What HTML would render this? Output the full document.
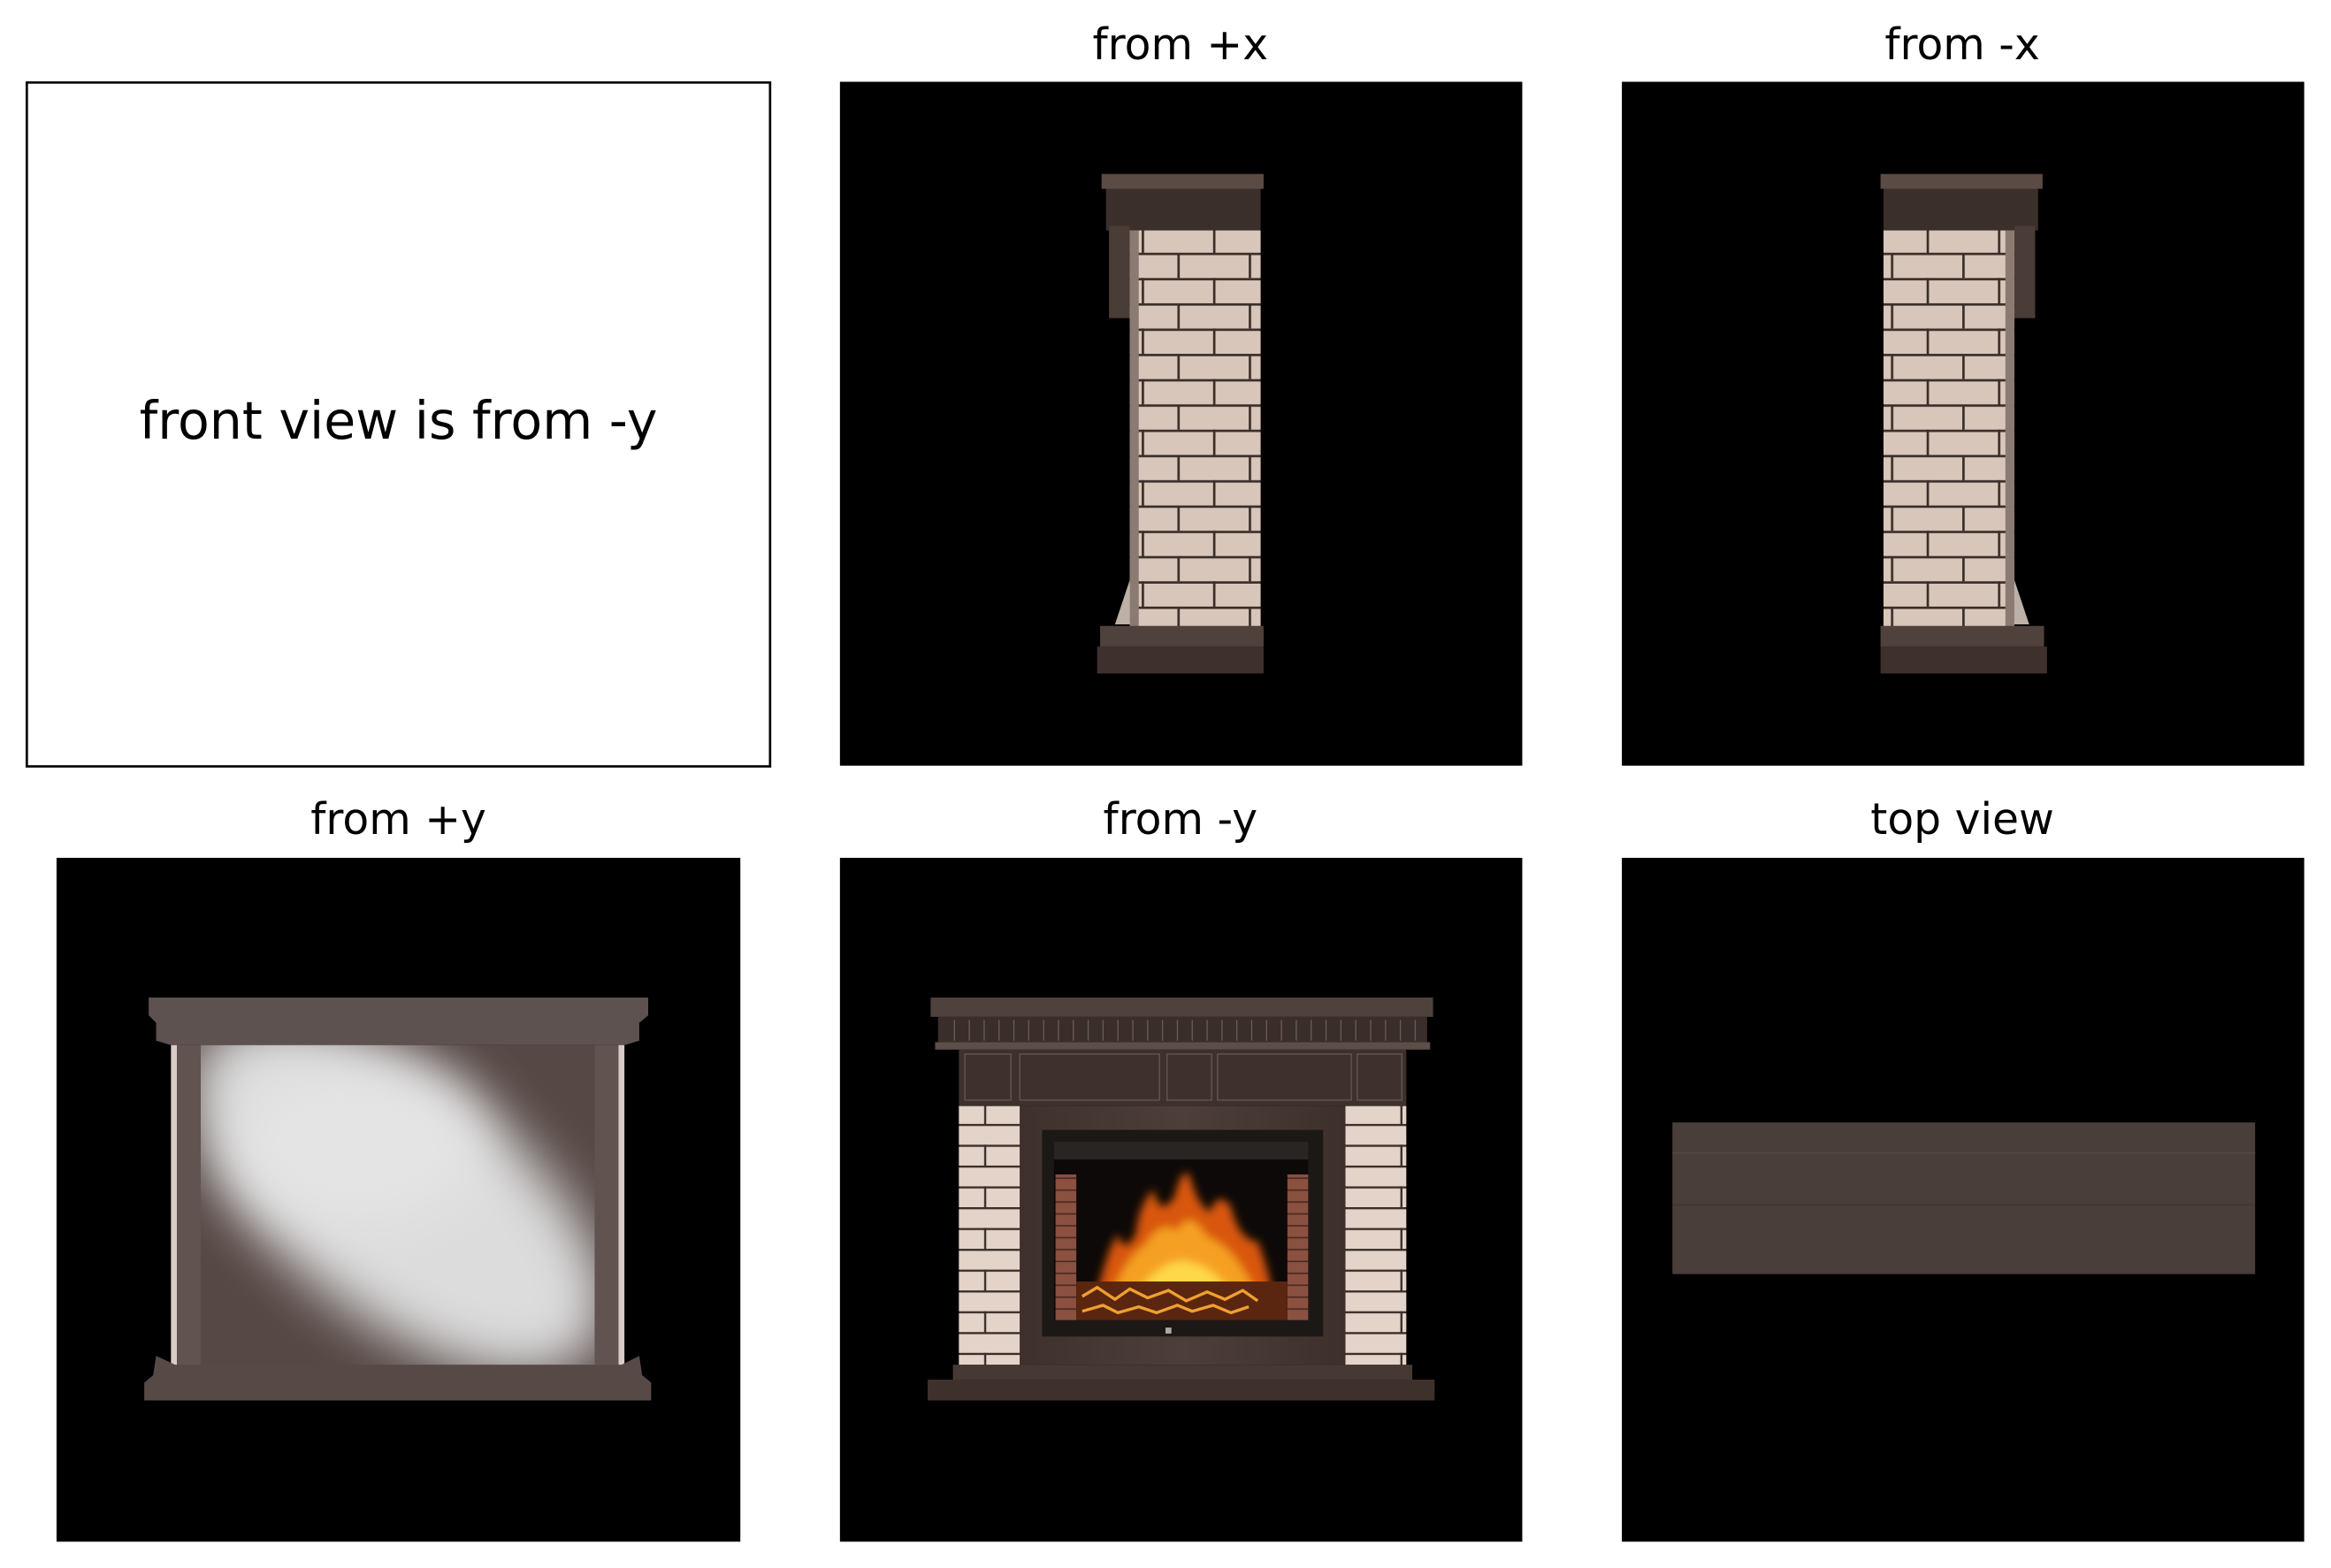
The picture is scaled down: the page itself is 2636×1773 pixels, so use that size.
<!DOCTYPE html>
<html><head><meta charset="utf-8"><style>
html,body{margin:0;padding:0;background:#fff;}
svg{display:block;}
text{font-family:"DejaVu Sans","Liberation Sans",sans-serif;fill:#000;}
</style></head><body>
<svg width="2636" height="1773" viewBox="0 0 1568 1054.7" xmlns="http://www.w3.org/2000/svg">
<defs>
  <pattern id="brickP" x="0" y="0" width="48" height="34" patternUnits="userSpaceOnUse">
    <rect width="48" height="34" fill="#d9c6ba"/>
    <rect x="0" y="0" width="48" height="1.6" fill="#3a2e2a"/>
    <rect x="0" y="17" width="48" height="1.6" fill="#3a2e2a"/>
    <rect x="24" y="0" width="1.6" height="17" fill="#3a2e2a"/>
    <rect x="0" y="17" width="1.6" height="17" fill="#3a2e2a"/>
  </pattern>
  <pattern id="brickS" x="0" y="0" width="40" height="28" patternUnits="userSpaceOnUse">
    <rect width="40" height="28" fill="#e4d3c8"/>
    <rect x="0" y="0" width="40" height="1.4" fill="#3a2e2a"/>
    <rect x="0" y="14" width="40" height="1.4" fill="#3a2e2a"/>
    <rect x="22" y="14" width="1.4" height="14" fill="#3a2e2a"/>
  </pattern>
  <pattern id="redB" width="12" height="8" patternUnits="userSpaceOnUse">
    <rect width="12" height="8" fill="#8a5040"/>
    <rect y="0" width="12" height="1" fill="#4a2a20"/>
  </pattern>
  <linearGradient id="wood" x1="0" x2="1">
    <stop offset="0" stop-color="#3e312c"/><stop offset=".5" stop-color="#4d3e39"/><stop offset="1" stop-color="#3d302b"/>
  </linearGradient>
  <radialGradient id="fire" cx=".5" cy=".75" r=".5">
    <stop offset="0" stop-color="#ffd23a"/><stop offset=".4" stop-color="#f08a12"/><stop offset=".8" stop-color="#8a2a05"/><stop offset="1" stop-color="#1a0a05" stop-opacity="0"/>
  </radialGradient>
  <filter id="blur" x="-50%" y="-50%" width="200%" height="200%"><feGaussianBlur stdDeviation="18"/></filter>
  <filter id="fblur" x="-20%" y="-20%" width="140%" height="140%"><feGaussianBlur stdDeviation="3"/></filter>
  <clipPath id="inner4"><rect x="135" y="703" width="265" height="215"/></clipPath>
</defs>

<!-- titles -->
<text x="794" y="40" font-size="29" text-anchor="middle">from +x</text>
<text x="1320" y="40" font-size="29" text-anchor="middle">from -x</text>
<text x="268" y="561" font-size="29" text-anchor="middle">from +y</text>
<text x="794" y="561" font-size="29" text-anchor="middle">from -y</text>
<text x="1320" y="561" font-size="29" text-anchor="middle">top view</text>

<!-- panel 1 -->
<rect x="18" y="55.5" width="500" height="460" fill="#fff" stroke="#000" stroke-width="1.6"/>
<text x="268" y="295" font-size="34.8" text-anchor="middle">front view is from -y</text>

<!-- panel 2: from +x -->
<rect x="565" y="55" width="459" height="460" fill="#000"/>
<g>
  <rect x="741" y="117" width="109" height="10" fill="#5a4b45"/>
  <rect x="744" y="127" width="104" height="28" fill="#3b2f2b"/>
  <rect x="746" y="152" width="14" height="62" fill="#4a3c37"/>
  <rect x="760" y="155" width="88" height="268" fill="url(#brickP)"/>
  <rect x="760" y="155" width="6" height="268" fill="#8a7a72"/>
  <path d="M760 390 L750 420 L760 420Z" fill="#bdb0a8"/>
  <rect x="740" y="421" width="110" height="14" fill="#4f413c"/>
  <rect x="738" y="435" width="112" height="18" fill="#3e312d"/>
</g>

<!-- panel 3: from -x -->
<rect x="1091" y="55" width="459" height="460" fill="#000"/>
<g>
  <rect x="1265" y="117" width="109" height="10" fill="#5a4b45"/>
  <rect x="1267" y="127" width="104" height="28" fill="#3b2f2b"/>
  <rect x="1355" y="152" width="14" height="62" fill="#4a3c37"/>
  <rect x="1267" y="155" width="88" height="268" fill="url(#brickP)"/>
  <rect x="1349" y="155" width="6" height="268" fill="#8a7a72"/>
  <path d="M1355 390 L1365 420 L1355 420Z" fill="#bdb0a8"/>
  <rect x="1265" y="421" width="110" height="14" fill="#4f413c"/>
  <rect x="1265" y="435" width="112" height="18" fill="#3e312d"/>
</g>

<!-- panel 4: from +y -->
<rect x="38" y="577" width="460" height="460" fill="#000"/>
<g>
  <path d="M100 671 L436 671 L436 683 L430 688 L430 700 L420 703 L115 703 L105 700 L105 688 L100 683Z" fill="#5e5250"/>
  <rect x="115" y="703" width="305" height="218" fill="#564845"/>
  <rect x="115" y="703" width="4" height="215" fill="#d8cdc6"/>
  <rect x="416" y="703" width="4" height="215" fill="#d8cdc6"/>
  <rect x="119" y="703" width="16" height="215" fill="#615450"/>
  <rect x="400" y="703" width="16" height="215" fill="#615450"/>
  <g clip-path="url(#inner4)">
    <ellipse cx="268" cy="805" rx="165" ry="80" transform="rotate(38 268 805)" fill="#dcdcdc" filter="url(#blur)"/>
    <ellipse cx="240" cy="770" rx="85" ry="55" fill="#e4e4e4" filter="url(#blur)"/>
  </g>
  <path d="M105 912 L118 918 L418 918 L430 912 L432 925 L438 930 L438 942 L97 942 L97 930 L103 925Z" fill="#574a46"/>
</g>

<!-- panel 5: from -y -->
<rect x="565" y="577" width="459" height="460" fill="#000"/>
<g>
  <rect x="626" y="671" width="338" height="13" fill="#4f423d"/>
  <rect x="631" y="684" width="329" height="17" fill="#3a2e2a"/>
  <g stroke="#6a5a54" stroke-width="0.8">
    <path d="M642 686v14M652 686v14M662 686v14M672 686v14M682 686v14M692 686v14M702 686v14M712 686v14M722 686v14M732 686v14M742 686v14M752 686v14M762 686v14M772 686v14M782 686v14M792 686v14M802 686v14M812 686v14M822 686v14M832 686v14M842 686v14M852 686v14M862 686v14M872 686v14M882 686v14M892 686v14M902 686v14M912 686v14M922 686v14M932 686v14M942 686v14M952 686v14"/>
  </g>
  <rect x="629" y="701" width="333" height="5" fill="#5c4e49"/>
  <rect x="645" y="706" width="301" height="38" fill="#3e312c"/>
  <g fill="none" stroke="#66564f" stroke-width="0.8">
    <rect x="649" y="709" width="31" height="31"/><rect x="686" y="709" width="94" height="31"/>
    <rect x="785" y="709" width="30" height="31"/><rect x="819" y="709" width="90" height="31"/><rect x="913" y="709" width="30" height="31"/>
  </g>
  <rect x="645" y="744" width="41" height="174" fill="url(#brickS)"/>
  <rect x="905" y="744" width="41" height="174" fill="url(#brickS)"/>
  <rect x="686" y="744" width="219" height="174" fill="url(#wood)"/>
  <rect x="701" y="760" width="189" height="139" fill="#1c1816"/>
  <rect x="709" y="768" width="171" height="12" fill="#2a2522"/>
  <rect x="709" y="780" width="171" height="108" fill="#0d0908"/>
  <rect x="710" y="790" width="14" height="98" fill="url(#redB)"/>
  <rect x="866" y="790" width="14" height="98" fill="url(#redB)"/>
  <g filter="url(#fblur)">
    <path d="M738 870 Q745 840 752 830 Q756 845 764 830 Q766 810 776 800 Q780 820 790 805 Q795 785 800 790 Q806 812 814 815 Q820 800 828 812 Q834 835 846 835 Q852 850 856 870Z" fill="#d8560e"/>
    <path d="M748 870 Q758 845 770 838 Q780 820 792 828 Q800 812 812 832 Q830 838 845 870Z" fill="#f5a020"/>
    <path d="M765 870 Q778 850 795 848 Q815 850 828 870Z" fill="#ffd84a"/>
  </g>
  <rect x="724" y="862" width="142" height="26" fill="#5a2610"/>
  <g stroke="#f0a030" stroke-width="2" fill="none">
    <path d="M728 872 l10 -6 l12 8 l10 -7 l12 6 l14 -5 l12 7 l14 -6 l12 5 l12 -6 l10 7"/>
    <path d="M728 882 l14 -4 l10 5 l14 -4 l12 4 l14 -5 l10 4 l14 -4 l12 5 l12 -4"/>
  </g>
  <rect x="784" y="893" width="4" height="4" fill="#aaa"/>
  <rect x="641" y="918" width="309" height="10" fill="#463934"/>
  <rect x="624" y="928" width="341" height="14" fill="#3e312c"/>
</g>

<!-- panel 6: top view -->
<rect x="1091" y="577" width="459" height="460" fill="#000"/>
<rect x="1125" y="755" width="392" height="102" fill="#4a3e3a"/>
<rect x="1125" y="775" width="392" height="1" fill="#554743"/>
<rect x="1125" y="810" width="392" height="1" fill="#413632"/>
</svg>
</body></html>
